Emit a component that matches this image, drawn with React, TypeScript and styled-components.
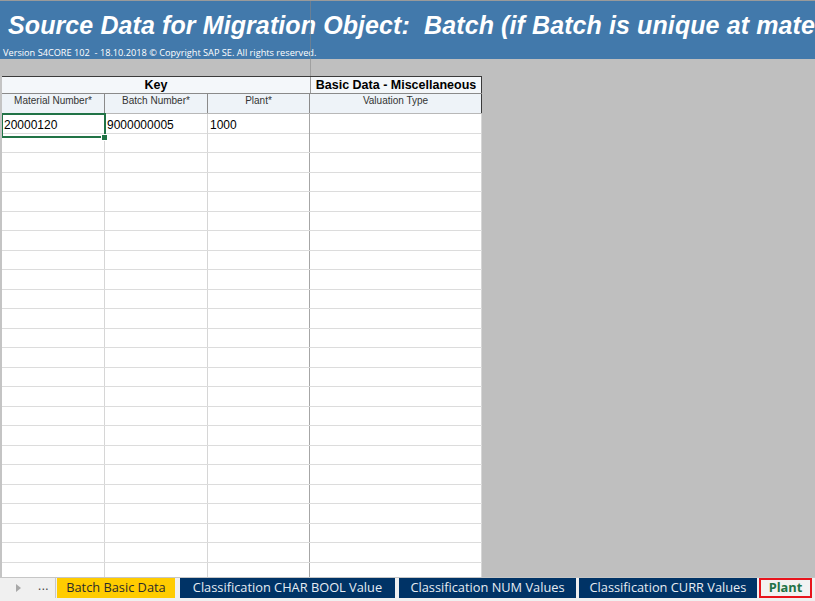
import React from "react";
import styled, { createGlobalStyle } from "styled-components";

const Global = createGlobalStyle`
  html, body { margin: 0; padding: 0; background: #ffffff; }
  body { width: 815px; height: 601px; overflow: hidden; font-family: "Liberation Sans", Arial, sans-serif; }
`;

const Page = styled.div`
  width: 815px;
  height: 601px;
  display: flex;
  flex-direction: column;
  overflow: hidden;
  border-top: 1px solid #9a9a9a;
  box-sizing: border-box;
  position: relative;
`;

const TopAccent = styled.div`
  position: absolute;
  left: 0;
  top: -1px;
  width: 105px;
  height: 1px;
  background: #217346;
`;

const Banner = styled.div`
  position: relative;
  height: 58px;
  flex: none;
  background: #4279ab;
  display: flex;
  flex-direction: column;
  overflow: hidden;
  white-space: nowrap;
  &::after {
    content: "";
    position: absolute;
    left: 310px;
    top: 0;
    bottom: 0;
    width: 1px;
    background: rgba(120, 130, 140, 0.75);
  }
`;

const Title = styled.div`
  font-family: "Liberation Sans", Arial, sans-serif;
  font-weight: bold;
  font-style: italic;
  font-size: 25px;
  color: #ffffff;
  padding: 10px 0 0 8px;
  line-height: 29px;
  letter-spacing: 0.1px;
`;

const Version = styled.div`
  font-family: "Open Sans", "Noto Sans", sans-serif;
  font-size: 9.2px;
  color: #ffffff;
  padding: 7px 0 0 3px;
  line-height: 12px;
`;

const Band = styled.div`
  position: relative;
  height: 17px;
  flex: none;
  background: #bfbfbf;
  &::after {
    content: "";
    position: absolute;
    left: 310px;
    top: 0;
    bottom: 0;
    width: 1px;
    background: #a0a0a0;
  }
`;

const Main = styled.div`
  flex: 1;
  display: flex;
  background: #bfbfbf;
  overflow: hidden;
`;

const Sheet = styled.div`
  width: 482px;
  background: #ffffff;
  display: flex;
  flex-direction: column;
  border-left: 2px solid #c4c4c4;
  box-sizing: border-box;
  overflow: hidden;
`;

const GroupRow = styled.div`
  display: grid;
  grid-template-columns: 308px 172px;
  height: 18px;
  flex: none;
  background: #f4f7fa;
  border-top: 1px solid #3a3a3a;
  border-bottom: 1px solid #8a8a8a;
  box-sizing: border-box;
`;

const GroupCell = styled.div<{ $last?: boolean }>`
  font-family: "Liberation Sans", Arial, sans-serif;
  font-weight: bold;
  font-size: 12.5px;
  color: #000;
  text-align: center;
  line-height: 16px;
  border-left: ${(p) => (p.$last ? "1px solid #9a9a9a" : "none")};
  border-right: ${(p) => (p.$last ? "1px solid #3a3a3a" : "none")};
  white-space: nowrap;
`;

const HeadRow = styled.div`
  display: grid;
  grid-template-columns: 103px 103px 102px 172px;
  height: 20px;
  flex: none;
  background: #eef3f8;
  border-bottom: 1px solid #b8b8b8;
  box-sizing: border-box;
`;

const HeadCell = styled.div<{ $last?: boolean }>`
  font-family: "Liberation Sans", Arial, sans-serif;
  font-size: 10px;
  color: #333;
  text-align: center;
  line-height: 14px;
  border-right: 1px solid ${(p) => (p.$last ? "#3a3a3a" : "#8a8a8a")};
  white-space: nowrap;
  overflow: hidden;
`;

const DataRow = styled.div<{ $tall: boolean }>`
  display: grid;
  grid-template-columns: 103px 103px 102px 172px;
  height: ${(p) => (p.$tall ? 20 : 19)}px;
  flex: none;
  border-bottom: 1px solid #dcdcdc;
  box-sizing: border-box;
`;

const Cell = styled.div<{ $strong?: boolean; $selected?: boolean }>`
  position: relative;
  font-family: "Liberation Sans", Arial, sans-serif;
  font-size: 12px;
  color: #000;
  line-height: 23px;
  padding-left: 2px;
  border-right: 1px solid ${(p) => (p.$strong ? "#a6a6a6" : "#d6d6d6")};
  white-space: nowrap;
  overflow: visible;
  ${(p) =>
    p.$selected
      ? `
    outline: 2px solid #217346;
    outline-offset: -1px;
    z-index: 1;
    &::after {
      content: "";
      position: absolute;
      right: -4px;
      bottom: -4px;
      width: 5px;
      height: 5px;
      background: #217346;
      border: 1px solid #fff;
    }
  `
      : ""}
`;

const TabBar = styled.div`
  height: 24px;
  flex: none;
  background: #f0f0f0;
  border-top: 1px solid #c6c6c6;
  box-sizing: border-box;
  display: flex;
  align-items: center;
  padding-left: 16px;
  padding-bottom: 3px;
`;

const Arrow = styled.div`
  width: 0;
  height: 0;
  border-top: 4px solid transparent;
  border-bottom: 4px solid transparent;
  border-left: 5px solid #a8a8a8;
  margin-right: 17px;
`;

const Dots = styled.div`
  font-family: "Open Sans", "Noto Sans", sans-serif;
  font-size: 12px;
  color: #444;
  line-height: 12px;
  padding-bottom: 4px;
  margin-right: 6px;
  letter-spacing: 0.5px;
`;

const Divider = styled.div`
  width: 1px;
  height: 20px;
  background: #c8c8c8;
  margin-right: 1px;
`;

const Tab = styled.div<{ $w: number; $gap: number; $kind: "active" | "nav" | "plain" }>`
  width: ${(p) => p.$w}px;
  height: 20px;
  margin-right: ${(p) => p.$gap}px;
  box-sizing: border-box;
  display: flex;
  align-items: center;
  justify-content: center;
  padding-bottom: 2px;
  font-family: "Open Sans", "Noto Sans", sans-serif;
  font-size: 12.8px;
  white-space: nowrap;
  overflow: hidden;
  background: ${(p) =>
    p.$kind === "active" ? "#ffcc00" : p.$kind === "nav" ? "#003366" : "#f2f2f2"};
  color: ${(p) =>
    p.$kind === "active" ? "#2b2b2b" : p.$kind === "nav" ? "#e6ecf3" : "#217346"};
  font-weight: ${(p) => (p.$kind === "plain" ? 700 : 400)};
  border: ${(p) => (p.$kind === "plain" ? "2px solid #e8141c" : "none")};
`;

const ROWS = 24;

export default function App() {
  const rows = Array.from({ length: ROWS }, (_, i) => i);
  return (
    <>
      <Global />
      <Page>
        <TopAccent />
        <Banner>
          <Title>Source Data for Migration Object:&nbsp; Batch (if Batch is unique at material level)</Title>
          <Version>Version S4CORE 102&nbsp; - 18.10.2018 © Copyright SAP SE. All rights reserved.</Version>
        </Banner>
        <Band />
        <Main>
          <Sheet>
            <GroupRow>
              <GroupCell>Key</GroupCell>
              <GroupCell $last>Basic Data - Miscellaneous</GroupCell>
            </GroupRow>
            <HeadRow>
              <HeadCell>Material Number*</HeadCell>
              <HeadCell>Batch Number*</HeadCell>
              <HeadCell>Plant*</HeadCell>
              <HeadCell $last>Valuation Type</HeadCell>
            </HeadRow>
            {rows.map((i) => (
              <DataRow key={i} $tall={i % 2 === 0}>
                <Cell $selected={i === 0}>{i === 0 ? "20000120" : ""}</Cell>
                <Cell>{i === 0 ? "9000000005" : ""}</Cell>
                <Cell $strong>{i === 0 ? "1000" : ""}</Cell>
                <Cell />
              </DataRow>
            ))}
          </Sheet>
        </Main>
        <TabBar>
          <Arrow />
          <Dots>...</Dots>
          <Divider />
          <Tab $w={118} $gap={5} $kind="active">Batch Basic Data</Tab>
          <Tab $w={215} $gap={4} $kind="nav">Classification CHAR BOOL Value</Tab>
          <Tab $w={177} $gap={3} $kind="nav">Classification NUM Values</Tab>
          <Tab $w={178} $gap={2} $kind="nav">Classification CURR Values</Tab>
          <Tab $w={53} $gap={0} $kind="plain">Plant</Tab>
        </TabBar>
      </Page>
    </>
  );
}
